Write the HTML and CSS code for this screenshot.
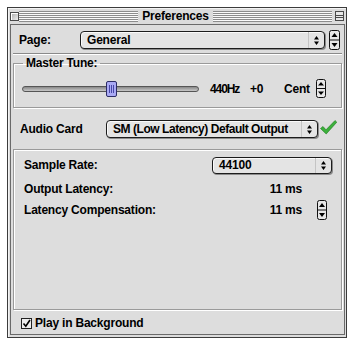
FILE: index.html
```html
<!DOCTYPE html>
<html lang="en">
<head>
    <meta charset="UTF-8">
    <title>Preferences</title>
    <link rel="stylesheet" href="styles.css">
</head>
<body>
    <div class="window">
        <div class="titlebar">
            <span class="close-box"></span>
            <span class="stripes"></span>
            <span class="title">Preferences</span>
            <span class="stripes"></span>
            <span class="shade-box"></span>
        </div>
        <div class="content">
            <div class="page-row">
                <span class="page-label">Page:</span>
                <div class="popup page-popup">
                    <span class="popup-text">General</span>
                    <span class="popup-arrows"><svg width="5" height="9" viewBox="0 0 5 9"><path d="M2.5 0L5 3.5H0Z M0 5.5H5L2.5 9Z" fill="#000"/></svg></span>
                </div>
                <svg class="stepper page-stepper" width="11" height="20" viewBox="0 0 11 20"><rect x="0.5" y="0.5" width="10" height="19" rx="2" fill="#e8e8e8" stroke="#111"/><line x1="1" y1="10" x2="10" y2="10" stroke="#111"/><path d="M5.5 3L8.5 7H2.5Z M2.5 13H8.5L5.5 17Z" fill="#000"/></svg>
            </div>

            <div class="separator"></div>

            <fieldset class="tune-group">
                <legend>Master Tune:</legend>
                <div class="tune-row">
                    <div class="slider">
                        <div class="track"></div>
                        <div class="thumb"></div>
                    </div>
                    <span class="hz">440Hz</span>
                    <span class="plus">+0</span>
                    <span class="cent">Cent</span>
                    <svg class="stepper" width="10" height="19" viewBox="0 0 10 19"><rect x="0.5" y="0.5" width="9" height="18" rx="2" fill="#e8e8e8" stroke="#111"/><line x1="1" y1="9.5" x2="9" y2="9.5" stroke="#111"/><path d="M5 3L8 6.5H2Z M2 12.5H8L5 16Z" fill="#000"/></svg>
                </div>
            </fieldset>

            <div class="audio-row">
                <span class="audio-label">Audio Card</span>
                <div class="popup audio-popup">
                    <span class="popup-text">SM (Low Latency) Default Output</span>
                    <span class="popup-arrows"><svg width="5" height="9" viewBox="0 0 5 9"><path d="M2.5 0L5 3.5H0Z M0 5.5H5L2.5 9Z" fill="#000"/></svg></span>
                </div>
                <svg class="ok-check" width="17" height="15" viewBox="0 0 17 15"><path d="M0.5 8.5L3 6.5L6 9.8L15 0.5L16.8 2.2L6.2 14Z" fill="#3bb03b" stroke="#1f7a1f" stroke-width="0.6"/></svg>
            </div>

            <div class="latency-group">
                <div class="group-row sample-row">
                    <span class="row-label">Sample Rate:</span>
                    <div class="popup rate-popup">
                        <span class="popup-text">44100</span>
                        <span class="popup-arrows"><svg width="5" height="9" viewBox="0 0 5 9"><path d="M2.5 0L5 3.5H0Z M0 5.5H5L2.5 9Z" fill="#000"/></svg></span>
                    </div>
                </div>
                <div class="group-row output-row">
                    <span class="row-label">Output Latency:</span>
                    <span class="ms">11 ms</span>
                </div>
                <div class="group-row comp-row">
                    <span class="row-label">Latency Compensation:</span>
                    <span class="ms">11 ms</span>
                    <svg class="stepper" width="10" height="20" viewBox="0 0 10 20"><rect x="0.5" y="0.5" width="9" height="19" rx="2" fill="#e8e8e8" stroke="#111"/><line x1="1" y1="10" x2="9" y2="10" stroke="#111"/><path d="M5 3L8 7H2Z M2 13H8L5 17Z" fill="#000"/></svg>
                </div>
            </div>

            <div class="check-row">
                <span class="checkbox"><svg width="9" height="9" viewBox="0 0 9 9"><path d="M1.5 4.5L3.8 7.2L8 1" stroke="#000" stroke-width="1.6" fill="none"/></svg></span>
                <span>Play in Background</span>
            </div>
        </div>
    </div>
</body>
</html>
```

FILE: styles.css
```css
body {
    margin: 0;
    background: #fff;
    font-family: "Liberation Sans", Arial, sans-serif;
    font-size: 12px;
    font-weight: bold;
    letter-spacing: -0.2px;
    color: #000;
}

.window {
    margin: 7px 0 0 7px;
    width: 340px;
    height: 331px;
    box-sizing: border-box;
    border: 1px solid #3c3c3c;
    background: #dcdcdc;
    padding: 0 1px 2px 2px;
    display: flex;
    flex-direction: column;
    box-shadow: inset 1px 1px 0 #f4f4f4;
}

/* Title bar */
.titlebar {
    height: 16px;
    display: flex;
    align-items: center;
}

.close-box {
    width: 9px;
    height: 9px;
    box-sizing: border-box;
    border: 1px solid #4a4a4a;
    background: linear-gradient(135deg, #a8a8a8, #f0f0f0);
    box-shadow: inset 1px 1px 0 #fff;
}

.stripes {
    flex: 1;
    height: 11px;
    background: repeating-linear-gradient(to bottom, #8c8c8c 0 1px, #fafafa 1px 2px);
}

.stripes:first-of-type {
    margin-left: 6px;
}

.title {
    padding: 0 4px;
    line-height: 14px;
}

.shade-box {
    width: 9px;
    height: 10px;
    box-sizing: border-box;
    margin-left: 3px;
    margin-right: 1px;
    border: 1px solid #4a4a4a;
    background: linear-gradient(to bottom, #e8e8e8 0 3px, #4a4a4a 3px 4px, #e8e8e8 4px 5px, #4a4a4a 5px 6px, #e8e8e8 6px);
}

.content {
    flex: 1;
    border: 1px solid #6a6a6a;
    background: #dddddd;
}

/* Popup menus */
.popup {
    display: flex;
    align-items: center;
    height: 18px;
    box-sizing: border-box;
    border: 1px solid #1c1c1c;
    border-radius: 4px;
    background: #e4e4e4;
    box-shadow: 1px 1px 0 #8c8c8c, inset 1px 1px 0 #fafafa;
}

.popup-text {
    flex: 1;
    padding-left: 6px;
    white-space: nowrap;
    overflow: hidden;
}

.popup-arrows {
    width: 15px;
    height: 100%;
    display: flex;
    align-items: center;
    justify-content: center;
    border-left: 1px solid #c4c4c4;
}

.stepper {
    display: block;
    flex: none;
}

/* Page row */
.page-row {
    margin-top: 5px;
    height: 20px;
    display: flex;
    align-items: center;
    padding-left: 8px;
}

.page-label {
    width: 61px;
}

.page-popup {
    width: 245px;
}

.page-stepper {
    margin-left: 4px;
}

.separator {
    margin: 3px 2px 0;
    border-top: 1px solid #8a8a8a;
    border-bottom: 1px solid #fff;
}

/* Master tune */
.tune-group {
    margin: 1px 2px 0;
    padding: 0;
    min-width: 0;
    border: 1px solid #9a9a9a;
    box-shadow: inset 1px 1px 0 #fff, 1px 1px 0 #fff;
}

.tune-group legend {
    margin-left: 9px;
    padding: 0 3px;
    line-height: 14px;
}

.tune-row {
    height: 37px;
    display: flex;
    align-items: center;
    padding-left: 8px;
}

.slider {
    position: relative;
    width: 177px;
    height: 16px;
}

.track {
    margin-top: 5px;
    height: 6px;
    box-sizing: border-box;
    border: 1px solid #555;
    border-radius: 3px;
    background: linear-gradient(to bottom, #888, #c8c8c8);
}

.thumb {
    position: absolute;
    left: 84px;
    top: 0;
    width: 11px;
    height: 16px;
    box-sizing: border-box;
    border: 1px solid #2c2c66;
    border-radius: 2px;
    background: linear-gradient(to right, #a9a9f4 0 2px, #4848a8 2px 3px, #a9a9f4 3px 4px, #4848a8 4px 5px, #a9a9f4 5px 6px, #4848a8 6px 7px, #a9a9f4 7px);
    background-size: 100% 8px;
    background-position: 0 3px;
    background-repeat: no-repeat;
    background-color: #a9a9f4;
}

.hz {
    margin-left: 11px;
    width: 40px;
    letter-spacing: -1.1px;
}

.plus {
    width: 34px;
}

.cent {
    width: 32px;
}

/* Audio card */
.audio-row {
    margin-top: 11px;
    height: 20px;
    display: flex;
    align-items: center;
    padding-left: 9px;
}

.audio-label {
    width: 86px;
}

.audio-popup {
    width: 212px;
}

.audio-popup .popup-text {
    letter-spacing: -0.45px;
}

.ok-check {
    margin-left: 2px;
    margin-top: -4px;
}

/* Latency group */
.latency-group {
    margin: 10px 2px 0;
    height: 161px;
    box-sizing: border-box;
    border: 1px solid #9a9a9a;
    box-shadow: inset 1px 1px 0 #fff, 1px 1px 0 #fff;
    padding-left: 10px;
}

.group-row {
    height: 20px;
    display: flex;
    align-items: center;
}

.sample-row {
    margin-top: 5px;
}

.output-row {
    margin-top: 4px;
}

.comp-row {
    margin-top: 1px;
}

.row-label {
    width: 188px;
}

.rate-popup {
    width: 120px;
    height: 17px;
}

.ms {
    width: 90px;
    text-align: right;
}

.comp-row .stepper {
    margin-left: 15px;
}

/* Checkbox */
.check-row {
    margin-top: 6px;
    height: 14px;
    display: flex;
    align-items: center;
    gap: 3px;
    padding-left: 10px;
}

.checkbox {
    width: 11px;
    height: 11px;
    box-sizing: border-box;
    border: 1px solid #222;
    background: #eee;
    display: flex;
    align-items: center;
    justify-content: center;
}
```
